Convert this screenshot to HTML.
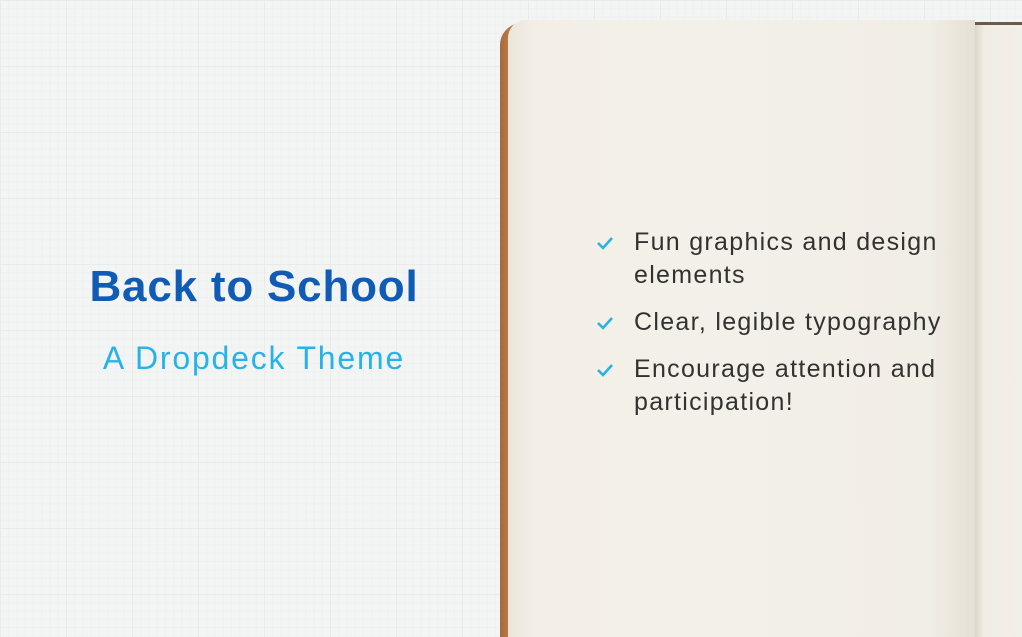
<!DOCTYPE html>
<html><head><meta charset="utf-8"><style>
html,body{margin:0;padding:0}
body{width:1022px;height:637px;overflow:hidden;position:relative;background:#f3f5f5;
background-image:linear-gradient(#e8ebec 1px,transparent 1px),linear-gradient(90deg,#e8ebec 1px,transparent 1px),linear-gradient(#eff1f1 1px,transparent 1px),linear-gradient(90deg,#eff1f1 1px,transparent 1px);
background-size:66px 66px,66px 66px,8.25px 8.25px,8.25px 8.25px;font-family:"Liberation Sans",sans-serif}
.cork{position:absolute;left:500px;top:23px;width:40px;height:614px;border-radius:22px 0 0 0;background:linear-gradient(90deg,#a8693a,#c58a55 40%,#b0733f);}
.page{position:absolute;left:508px;top:20px;width:467px;height:617px;border-radius:18px 0 0 0;background:linear-gradient(90deg,#ebe5d9 0,#f3efe7 6%,#f3f0e9 40%,#f1eee6 90%,#e5e0d5 100%)}
.rpage{position:absolute;left:975px;top:25px;width:47px;height:612px;background:linear-gradient(90deg,#ddd7cb,#f1ede5 20%,#f2efe8)}
.topline{position:absolute;left:975px;top:22px;width:50px;height:3px;background:#6b5a4a}
h1{position:absolute;left:0;width:508px;top:262px;margin:0;text-align:center;font-size:44px;font-weight:bold;color:#0f5bb5;letter-spacing:0.8px}
h2{position:absolute;left:0;width:508px;top:340px;margin:0;text-align:center;font-size:32px;font-weight:normal;color:#27b3ea;letter-spacing:1.8px}
ul{position:absolute;left:596px;top:226px;margin:0;padding:0;list-style:none;font-size:25px;line-height:33px;color:#333230;letter-spacing:1.3px}
li{position:relative;padding-left:38px;margin-bottom:14px;width:350px}
li svg{position:absolute;left:0;top:10px}
</style></head><body>
<div class="cork"></div>
<div class="page"></div>
<div class="rpage"></div>
<div class="topline"></div>
<h1>Back to School</h1>
<h2>A Dropdeck Theme</h2>
<ul>
<li><svg width="18" height="14" viewBox="0 0 18 14"><path d="M2 7l5 5L16 2" stroke="#27b3ea" stroke-width="2.6" fill="none"/></svg>Fun graphics and design elements</li>
<li><svg width="18" height="14" viewBox="0 0 18 14"><path d="M2 7l5 5L16 2" stroke="#27b3ea" stroke-width="2.6" fill="none"/></svg>Clear, legible typography</li>
<li><svg width="18" height="14" viewBox="0 0 18 14"><path d="M2 7l5 5L16 2" stroke="#27b3ea" stroke-width="2.6" fill="none"/></svg>Encourage attention and participation!</li>
</ul>
</body></html>
